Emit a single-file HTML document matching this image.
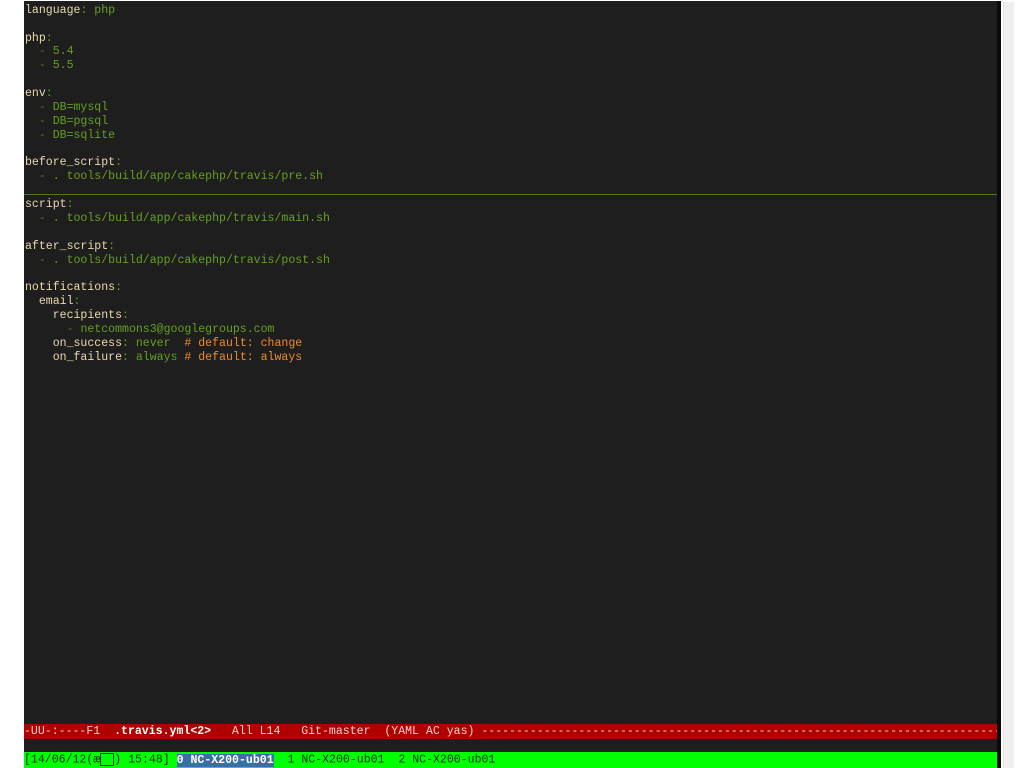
<!DOCTYPE html>
<html><head><meta charset="utf-8"><style>
html,body{margin:0;padding:0;width:1024px;height:768px;background:#fff;overflow:hidden}
#t{position:absolute;left:24px;top:1px;width:977px;height:767px;background:#1e1e1e;border-right:4px solid #0a0a0a;box-sizing:border-box}
.l{position:absolute;left:1px;white-space:pre;font-family:"Liberation Mono","Noto Sans CJK JP",monospace;font-size:11.55px;line-height:14px;height:14px}
.k{color:#ead9b0}.v{color:#64a01e}.c{color:#ee8a2a}.d{color:#4f7d18}
#sep{position:absolute;left:0;top:193px;width:973px;height:1px;background:#4a7a1a}
#ml{position:absolute;left:0;top:723px;width:973px;height:15px;background:#b00000;overflow:hidden}
#gb{position:absolute;left:0;top:751px;width:973px;height:16px;background:#00ff00;overflow:hidden}
#rs{position:absolute;left:1003px;top:2px;width:10px;height:766px;background:#f0efed;border-left:1px solid #e2e0dc}
</style></head><body>
<div id="t">
<div class="l" style="top:3px"><span class="k">language</span><span class="v">: php</span></div>
<div class="l" style="top:31px"><span class="k">php</span><span class="v">:</span></div>
<div class="l" style="top:44px"><span class="d">  - </span><span class="v">5.4</span></div>
<div class="l" style="top:58px"><span class="d">  - </span><span class="v">5.5</span></div>
<div class="l" style="top:86px"><span class="k">env</span><span class="v">:</span></div>
<div class="l" style="top:100px"><span class="d">  - </span><span class="v">DB=mysql</span></div>
<div class="l" style="top:114px"><span class="d">  - </span><span class="v">DB=pgsql</span></div>
<div class="l" style="top:128px"><span class="d">  - </span><span class="v">DB=sqlite</span></div>
<div class="l" style="top:155px"><span class="k">before_script</span><span class="v">:</span></div>
<div class="l" style="top:169px"><span class="d">  - </span><span class="v">. tools/build/app/cakephp/travis/pre.sh</span></div>
<div id="sep"></div>
<div class="l" style="top:197px"><span class="k">script</span><span class="v">:</span></div>
<div class="l" style="top:211px"><span class="d">  - </span><span class="v">. tools/build/app/cakephp/travis/main.sh</span></div>
<div class="l" style="top:239px"><span class="k">after_script</span><span class="v">:</span></div>
<div class="l" style="top:253px"><span class="d">  - </span><span class="v">. tools/build/app/cakephp/travis/post.sh</span></div>
<div class="l" style="top:280px"><span class="k">notifications</span><span class="v">:</span></div>
<div class="l" style="top:294px"><span class="k">  email</span><span class="v">:</span></div>
<div class="l" style="top:308px"><span class="k">    recipients</span><span class="v">:</span></div>
<div class="l" style="top:322px"><span class="d">      - </span><span class="v">netcommons3@googlegroups.com</span></div>
<div class="l" style="top:336px"><span class="k">    on_success</span><span class="v">: never  </span><span class="c"># default: change</span></div>
<div class="l" style="top:350px"><span class="k">    on_failure</span><span class="v">: always </span><span class="c"># default: always</span></div>
<div id="ml"><div class="l" style="top:1px;left:0;color:#f0d0d0">-UU-:----F1  <b style="color:#fff">.travis.yml&lt;2&gt;</b>   All L14   Git-master  (YAML AC yas) -----------------------------------------------------------------------------</div></div>
<div id="gb"><div class="l" style="top:1px;left:0;color:#003300">[14/06/12(æ<span style="display:inline-block;width:14px;border:1px solid #003300;box-sizing:border-box;height:13px;vertical-align:middle"></span>) 15:48] <span style="background:#3a6ea8;color:#fff;font-weight:bold">0 NC-X200-ub01</span>  1 NC-X200-ub01  2 NC-X200-ub01</div></div>
</div>
<div id="rs"></div>
</body></html>
